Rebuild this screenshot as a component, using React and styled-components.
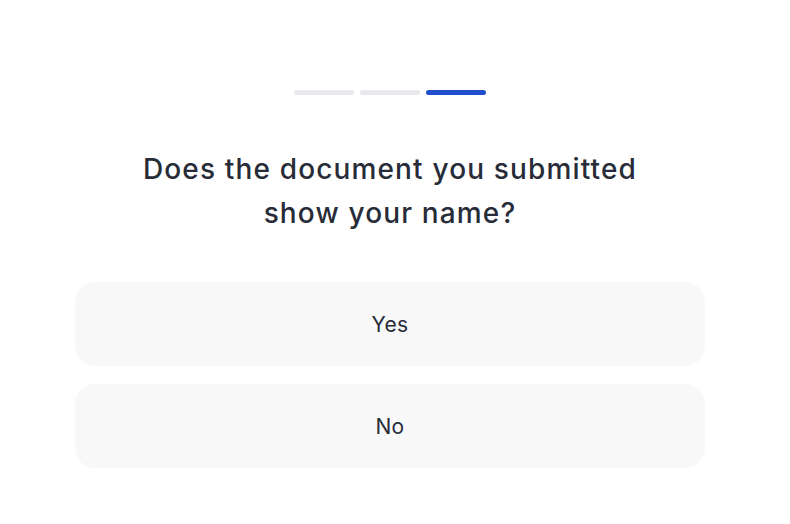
import React from "react";
import styled, { createGlobalStyle } from "styled-components";

const Global = createGlobalStyle`
  html, body { margin: 0; padding: 0; background: #ffffff; }
  body { font-family: Inter, "Noto Sans", sans-serif; color: #272c38; }
`;

const Page = styled.div`
  width: 780px;
  display: flex;
  flex-direction: column;
  align-items: center;
  padding-top: 90px;
`;

const Steps = styled.div`
  display: flex;
  gap: 6px;
`;

const Step = styled.div`
  width: 60px;
  height: 5px;
  border-radius: 3px;
  background: ${(p) => (p.$active ? "#1f4fcc" : "#e8e9ee")};
`;

const Title = styled.h1`
  margin: 52px 0 0;
  font-size: 28px;
  font-weight: 500;
  line-height: 44px;
  text-align: center;
  letter-spacing: 1.15px;
  color: #272c38;
  width: 520px;
`;

const Options = styled.div`
  margin-top: 47px;
  width: 630px;
  display: flex;
  flex-direction: column;
  gap: 18px;
`;

const Option = styled.button`
  height: 84px;
  border: none;
  border-radius: 20px;
  background: #f8f8f8;
  font-family: Inter, "Noto Sans", sans-serif;
  font-size: 21px;
  font-weight: 400;
  letter-spacing: 0.3px;
  color: #272c38;
  cursor: pointer;
  padding: 0;
`;

export default function App() {
  return (
    <>
      <Global />
      <Page>
        <Steps>
          <Step />
          <Step />
          <Step $active />
        </Steps>
        <Title>Does the document you submitted show your name?</Title>
        <Options>
          <Option>Yes</Option>
          <Option>No</Option>
        </Options>
      </Page>
    </>
  );
}
